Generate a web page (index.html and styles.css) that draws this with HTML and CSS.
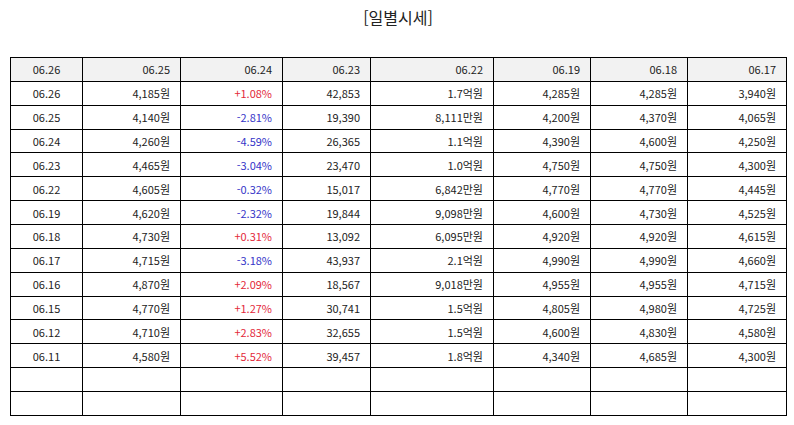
FILE: index.html
```html
<!DOCTYPE html>
<html lang="ko">
<head>
<meta charset="utf-8">
<link rel="stylesheet" href="styles.css">
</head>
<body>
<div class="page">
  <h1 class="title">[일별시세]</h1>
  <table class="prices">
    <colgroup>
      <col class="c1"><col class="c2"><col class="c3"><col class="c4"><col class="c5"><col class="c6"><col class="c7"><col class="c8">
    </colgroup>
    <thead>
      <tr><th class="center">06.26</th><th>06.25</th><th>06.24</th><th>06.23</th><th>06.22</th><th>06.19</th><th>06.18</th><th>06.17</th></tr>
    </thead>
    <tbody>
      <tr><td class="center">06.26</td><td>4,185원</td><td class="up">+1.08%</td><td>42,853</td><td>1.7억원</td><td>4,285원</td><td>4,285원</td><td>3,940원</td></tr>
      <tr><td class="center">06.25</td><td>4,140원</td><td class="down">-2.81%</td><td>19,390</td><td>8,111만원</td><td>4,200원</td><td>4,370원</td><td>4,065원</td></tr>
      <tr><td class="center">06.24</td><td>4,260원</td><td class="down">-4.59%</td><td>26,365</td><td>1.1억원</td><td>4,390원</td><td>4,600원</td><td>4,250원</td></tr>
      <tr><td class="center">06.23</td><td>4,465원</td><td class="down">-3.04%</td><td>23,470</td><td>1.0억원</td><td>4,750원</td><td>4,750원</td><td>4,300원</td></tr>
      <tr><td class="center">06.22</td><td>4,605원</td><td class="down">-0.32%</td><td>15,017</td><td>6,842만원</td><td>4,770원</td><td>4,770원</td><td>4,445원</td></tr>
      <tr><td class="center">06.19</td><td>4,620원</td><td class="down">-2.32%</td><td>19,844</td><td>9,098만원</td><td>4,600원</td><td>4,730원</td><td>4,525원</td></tr>
      <tr><td class="center">06.18</td><td>4,730원</td><td class="up">+0.31%</td><td>13,092</td><td>6,095만원</td><td>4,920원</td><td>4,920원</td><td>4,615원</td></tr>
      <tr><td class="center">06.17</td><td>4,715원</td><td class="down">-3.18%</td><td>43,937</td><td>2.1억원</td><td>4,990원</td><td>4,990원</td><td>4,660원</td></tr>
      <tr><td class="center">06.16</td><td>4,870원</td><td class="up">+2.09%</td><td>18,567</td><td>9,018만원</td><td>4,955원</td><td>4,955원</td><td>4,715원</td></tr>
      <tr><td class="center">06.15</td><td>4,770원</td><td class="up">+1.27%</td><td>30,741</td><td>1.5억원</td><td>4,805원</td><td>4,980원</td><td>4,725원</td></tr>
      <tr><td class="center">06.12</td><td>4,710원</td><td class="up">+2.83%</td><td>32,655</td><td>1.5억원</td><td>4,600원</td><td>4,830원</td><td>4,580원</td></tr>
      <tr><td class="center">06.11</td><td>4,580원</td><td class="up">+5.52%</td><td>39,457</td><td>1.8억원</td><td>4,340원</td><td>4,685원</td><td>4,300원</td></tr>
      <tr><td></td><td></td><td></td><td></td><td></td><td></td><td></td><td></td></tr>
      <tr><td></td><td></td><td></td><td></td><td></td><td></td><td></td><td></td></tr>
    </tbody>
  </table>
</div>
</body>
</html>
```
FILE: styles.css
```css
html, body {
  margin: 0;
  padding: 0;
  background: #fff;
}
body {
  font-family: "Noto Sans CJK KR", "Noto Sans", sans-serif;
  color: #222;
}
.page {
  padding: 0 8px 0 10px;
}
.title {
  margin: 0;
  padding-top: 5px;
  height: 57px;
  box-sizing: border-box;
  text-align: center;
  font-size: 16px;
  font-weight: 400;
  line-height: 24px;
  color: #222;
}
.prices {
  width: 776px;
  table-layout: fixed;
  border-collapse: collapse;
  font-size: 11px;
}
.c1 { width: 72px; }
.c2 { width: 98px; }
.c3 { width: 102px; }
.c4 { width: 88px; }
.c5 { width: 123px; }
.c6 { width: 97px; }
.c7 { width: 97px; }
.c8 { width: 99px; }
.prices th,
.prices td {
  border: 1px solid #000;
  height: 23.87px;
  padding: 0 10px;
  box-sizing: border-box;
  text-align: right;
  font-weight: 400;
  line-height: 14px;
  white-space: nowrap;
}
.prices th {
  background: #f2f2f2;
}
.prices .center {
  text-align: center;
}
.prices .up {
  color: #e3283a;
}
.prices .down {
  color: #3535c8;
}
```
